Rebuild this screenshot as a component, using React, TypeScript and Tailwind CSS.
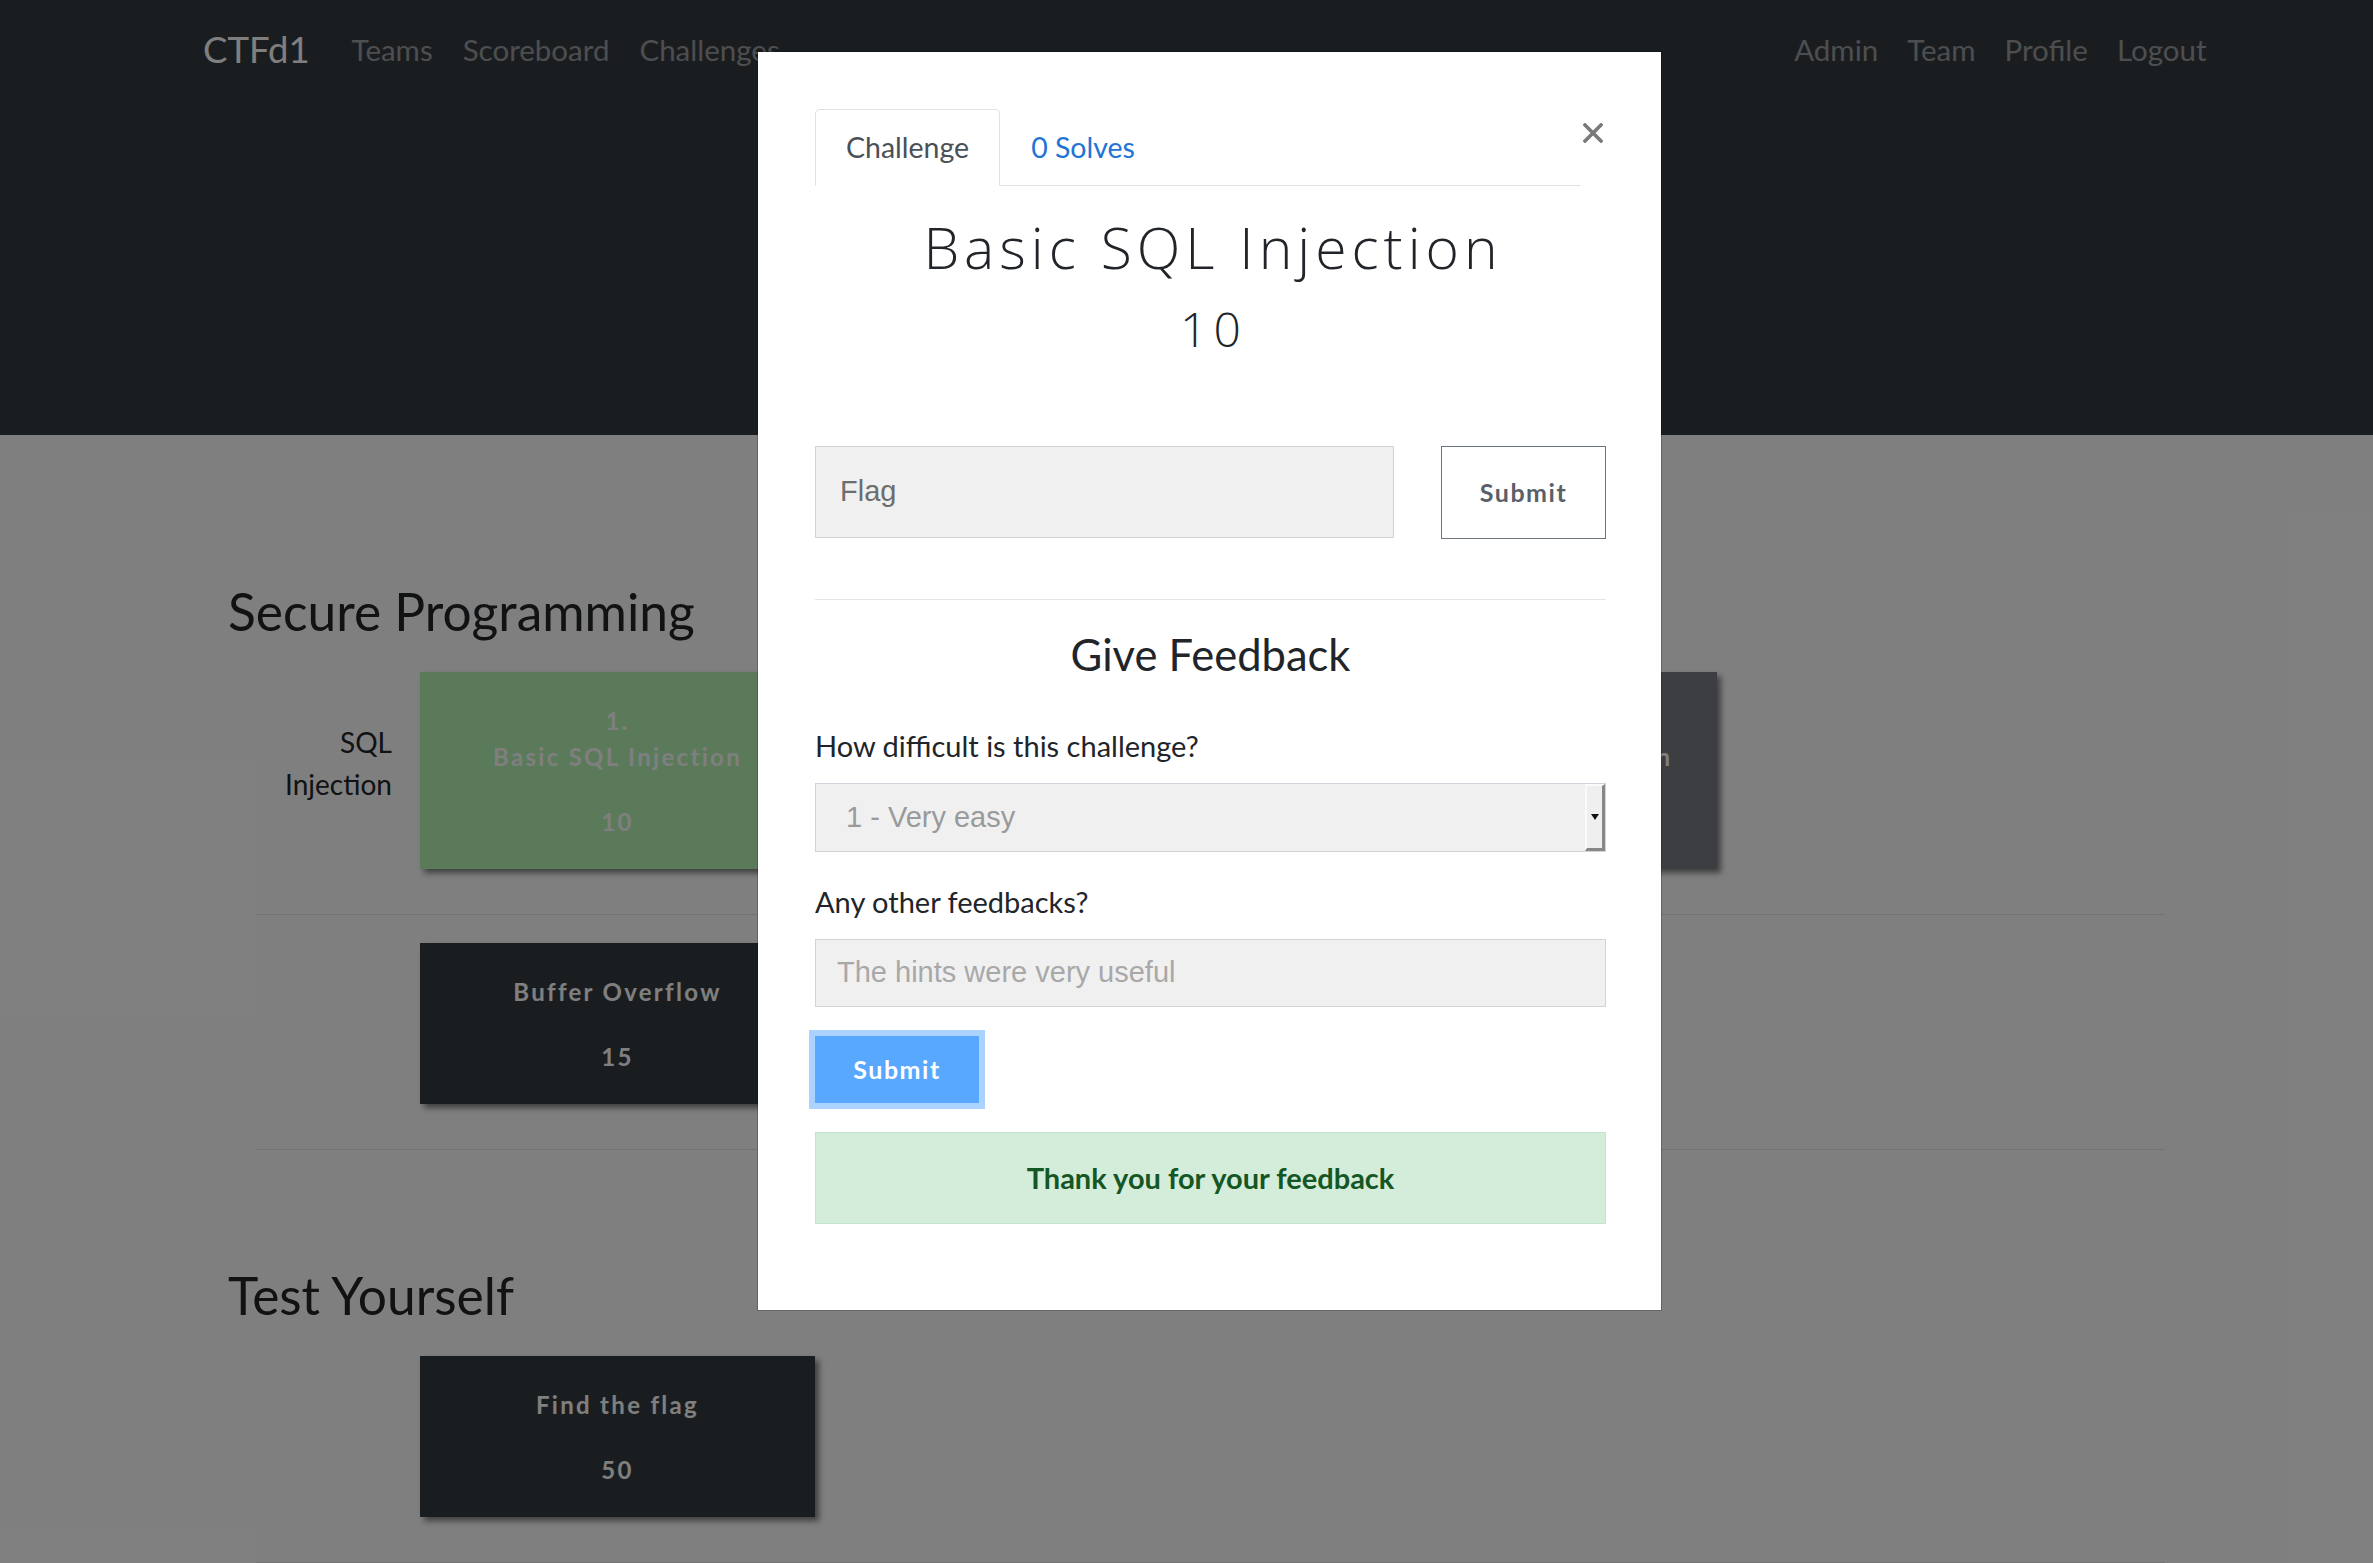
import React from "react";

interface CardProps {
  lines: string[];
  points: number;
  bg: string;
}

function ChallengeCard({ lines, points, bg }: CardProps) {
  return (
    <div
      className={`w-[395px] shrink-0 pt-[31px] pb-[29px] text-center text-white shadow-[4px_4px_6px_rgba(0,0,0,0.5)] ${bg}`}
    >
      {lines.map((line) => (
        <div key={line} className="text-[24px] font-bold leading-[36px] tracking-[2.3px]">
          {line}
        </div>
      ))}
      <div className="mt-[29px] text-[24px] font-bold leading-[36px] tracking-[2.3px]">{points}</div>
    </div>
  );
}

function CategoryRow({ label, children }: { label?: string[]; children: React.ReactNode }) {
  return (
    <div className="flex border-b border-black/10 pt-[28px] pb-[45px]">
      <div className="w-[136px] shrink-0 pt-[49px] text-right text-[28px] leading-[42px] text-[#212529]">
        {label?.map((l) => (
          <div key={l}>{l}</div>
        ))}
      </div>
      <div className="ml-[28px] flex gap-[56px]">{children}</div>
    </div>
  );
}

function ChallengeModal() {
  return (
    <div className="absolute left-[757px] top-[51px] h-[1260px] w-[905px] border border-black/20 bg-white bg-clip-padding pl-[57px] pr-[55px] pt-[57px]">
      {/* Tabs */}
      <div className="flex items-start">
        <div className="flex flex-1 border-b border-[#dee2e6]">
          <div className="-mb-px rounded-t-[5px] border border-[#dee2e6] border-b-white bg-white px-[30px] py-[20px] text-[28.5px] leading-[1.2] text-[#495057]">
            Challenge
          </div>
          <div className="border border-transparent px-[30px] py-[20px] text-[28.5px] leading-[1.2] text-[#2174d4]">
            0 Solves
          </div>
        </div>
        <button className="mt-[14px] flex w-[26px] justify-center">
          <svg width="20" height="20" viewBox="0 0 20 20">
            <path d="M2 2L18 18M18 2L2 18" stroke="#7a7a7a" strokeWidth="3.6" strokeLinecap="square" />
          </svg>
        </button>
      </div>

      <h3 className="mt-[27px] pl-[5px] text-center font-['Open_Sans',sans-serif] text-[57px] font-light leading-[1.2] tracking-[5px] text-[#212529]">
        Basic SQL Injection
      </h3>
      <div className="mt-[18px] pl-[6px] text-center font-['Open_Sans',sans-serif] text-[48px] font-light leading-[1.2] tracking-[6px] text-[#212529]">
        10
      </div>

      {/* Flag submission */}
      <div className="mt-[89px] flex items-start justify-between">
        <div className="flex h-[92px] w-[579px] items-center border border-[#d0d4da] bg-[#f0f0f0] pl-[24px] font-['Liberation_Sans',Arial,sans-serif] text-[29px] text-[#6d6d6d]">
          Flag
        </div>
        <button className="h-[93px] w-[165px] border-[1.5px] border-[#6c757d] bg-white text-[25px] font-bold tracking-[1.5px] text-[#5a6068]">
          Submit
        </button>
      </div>

      <div className="mt-[60px] border-t border-[#e6e6e6]" />

      {/* Feedback form */}
      <h4 className="mt-[28px] text-center text-[43.5px] leading-[1.2] text-[#212529]">Give Feedback</h4>

      <div className="mt-[49px] text-[29px] leading-[1.2] text-[#212529]">How difficult is this challenge?</div>
      <div className="mt-[19px] flex h-[69px] items-stretch border border-[#d0d4da] bg-[#f0f0f0]">
        <div className="flex flex-1 items-center pl-[30px] font-['Liberation_Sans',Arial,sans-serif] text-[29px] text-[#9a9a9a]">
          1 - Very easy
        </div>
        <div className="flex w-[20px] items-center justify-center border-b-[3px] border-l-[2px] border-r-[3px] border-t-[2px] border-b-[#888] border-l-[#fafafa] border-r-[#888] border-t-[#fafafa] bg-[#efefef]">
          <svg width="8" height="6" viewBox="0 0 8 6">
            <path d="M0 0H8L4 6Z" fill="#111" />
          </svg>
        </div>
      </div>

      <div className="mt-[33px] text-[29px] leading-[1.2] text-[#212529]">Any other feedbacks?</div>
      <div className="mt-[19px] flex h-[68px] items-center border border-[#d0d4da] bg-[#f0f0f0] pl-[21px] font-['Liberation_Sans',Arial,sans-serif] text-[29px] text-[#a8a8a8]">
        The hints were very useful
      </div>

      <button className="mt-[29px] h-[67px] w-[164px] bg-[#58a8ff] text-[25px] font-bold tracking-[1.5px] text-white ring-[6px] ring-[#acd3ff]">
        Submit
      </button>

      <div className="mt-[29px] flex h-[92px] items-center justify-center border border-[#c3e6cb] bg-[#d4edda] text-[29px] font-bold text-[#155724]">
        Thank you for your feedback
      </div>
    </div>
  );
}

export default function App() {
  const leftLinks = ["Teams", "Scoreboard", "Challenges"];
  const rightLinks = ["Admin", "Team", "Profile", "Logout"];

  return (
    <div className="relative h-[1563px] overflow-hidden bg-white font-['Lato',sans-serif]">
      {/* Navbar + jumbotron */}
      <div className="bg-[#343a40]">
        <nav className="flex h-[100px] items-center pl-[203px] pr-[152px]">
          <span className="mr-[27px] text-[36.5px] leading-[1.2] text-white">CTFd1</span>
          {leftLinks.map((l) => (
            <span key={l} className="px-[15px] text-[29.5px] leading-[1.2] text-white/50">
              {l}
            </span>
          ))}
          <div className="flex-1" />
          {rightLinks.map((l) => (
            <span key={l} className="px-[14.5px] text-[29.5px] leading-[1.2] text-white/50">
              {l}
            </span>
          ))}
        </nav>
        <div className="h-[335px]" />
      </div>

      {/* Challenge board */}
      <main className="pt-[146px]">
        <h2 className="mb-[1px] pl-[228px] text-[51.5px] leading-[1.2] text-[#212529]">Secure Programming</h2>
        <div className="ml-[256px] w-[1909px]">
          <CategoryRow label={["SQL", "Injection"]}>
            <ChallengeCard lines={["1.", "Basic SQL Injection"]} points={10} bg="bg-[#b4f4b4]" />
            <ChallengeCard lines={["2.", "Union SQL Injection"]} points={20} bg="bg-[#343a40]" />
            <ChallengeCard lines={["3.", "Advanced SQL Injection"]} points={30} bg="bg-[#7b7c84]" />
          </CategoryRow>
          <CategoryRow>
            <ChallengeCard lines={["Buffer Overflow"]} points={15} bg="bg-[#343a40]" />
          </CategoryRow>
        </div>

        <h2 className="mb-[1px] mt-[115px] pl-[228px] text-[51.5px] leading-[1.2] text-[#212529]">Test Yourself</h2>
        <div className="ml-[256px] w-[1909px]">
          <CategoryRow>
            <ChallengeCard lines={["Find the flag"]} points={50} bg="bg-[#343a40]" />
          </CategoryRow>
        </div>
      </main>

      {/* Backdrop */}
      <div className="absolute inset-0 bg-black/50" />

      <ChallengeModal />
    </div>
  );
}
